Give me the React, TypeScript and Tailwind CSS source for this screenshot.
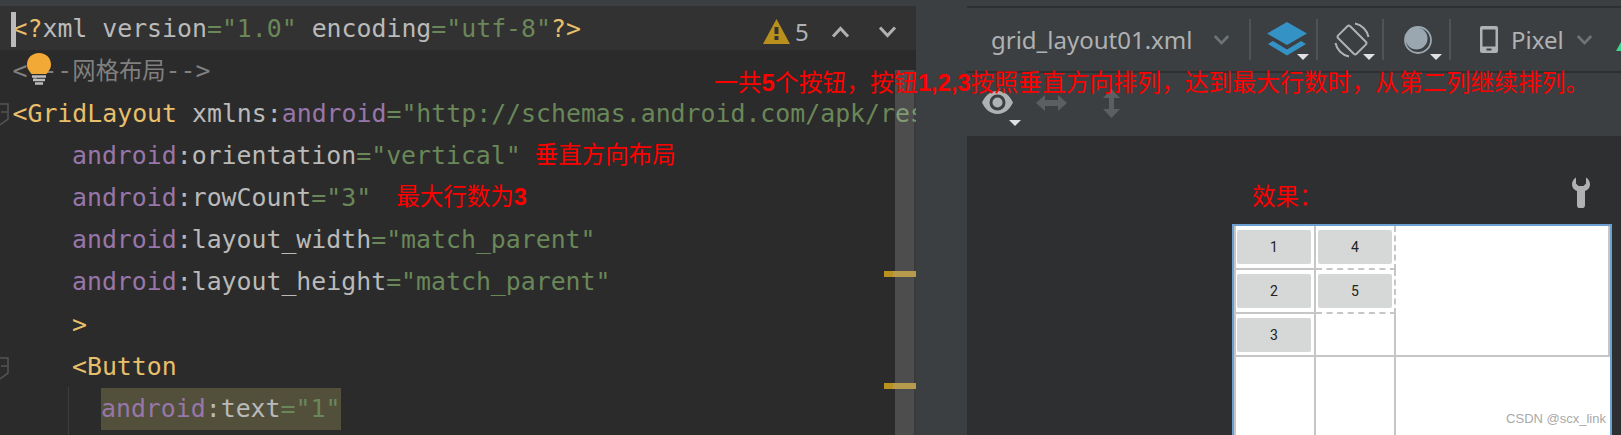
const mono = "font-['DejaVu_Sans_Mono','Liberation_Mono',monospace] text-[24.85px]"
const cjk = "font-['Liberation_Sans','Noto_Sans_CJK_SC',sans-serif]"
const ui = "font-['Noto_Sans','Open_Sans',sans-serif]"

const Tag = ({ children }: { children: React.ReactNode }) => <span className="text-[#e8bf6a]">{children}</span>
const Attr = ({ children }: { children: React.ReactNode }) => <span className="text-[#9876aa]">{children}</span>
const Str = ({ children }: { children: React.ReactNode }) => <span className="text-[#6a8759]">{children}</span>

function Note({ children, className = '' }: { children: React.ReactNode; className?: string }) {
  return <span className={`${cjk} text-[23.5px] text-[#ff0000] ${className}`}>{children}</span>
}

function Line({ children, indent = '' }: { children: React.ReactNode; indent?: string }) {
  return <div className={`h-[42.2px] flex items-center whitespace-pre ${indent}`}>{children}</div>
}

function AndroidAttr({ name, value }: { name: string; value: string }) {
  return (
    <>
      <Attr>android</Attr>:{name}
      <Str>="{value}"</Str>
    </>
  )
}

function Fold() {
  return (
    <svg width="9" height="23" viewBox="0 0 9 23" className="absolute left-0 fill-none stroke-[#555]">
      <path d="M0 1H8V16L0 22M1 9H7" strokeWidth="1.5" />
    </svg>
  )
}

function Caret({ className = '' }: { className?: string }) {
  return (
    <svg width="12" height="6" viewBox="0 0 12 6" className={`absolute ${className}`}>
      <path d="M0 0H12L6 6Z" fill="#dfe1e3" />
    </svg>
  )
}

function Chevron({ up = false, color = '#afb1b3', w = 19 }: { up?: boolean; color?: string; w?: number }) {
  return (
    <svg width={w} height="12" viewBox="0 0 19 12" fill="none">
      <path d={up ? 'M2 10.5L9.5 2.5L17 10.5' : 'M2 1.5L9.5 9.5L17 1.5'} stroke={color} strokeWidth="3" />
    </svg>
  )
}

function Divider() {
  return <div className="w-[2px] h-[41px] bg-[#505356]" />
}

function Editor() {
  return (
    <div className={`relative w-[916px] h-full overflow-hidden bg-[#2b2b2b] text-[#bababa] ${mono}`}>
      <div>
        <div className="h-[44px] pt-[1px] bg-[#323232] flex items-center pl-[12.5px] whitespace-pre">
          <Tag>&lt;?</Tag>xml version<Str>="1.0"</Str> encoding<Str>="utf-8"</Str><Tag>?&gt;</Tag>
        </div>
        <Line indent="pl-[12.5px]">
          <span className="text-[#808080]">
            &lt;!--<span className="font-['Noto_Sans_CJK_SC',sans-serif] text-[23.3px]">网格布局</span>--&gt;
          </span>
        </Line>
        <Line indent="pl-[12.5px]">
          <Tag>&lt;GridLayout</Tag> xmlns:<Attr>android</Attr>
          <Str>="http://schemas.android.com/apk/res/android"</Str>
        </Line>
        <Line indent="pl-[72px]">
          <AndroidAttr name="orientation" value="vertical" />
          <Note className="ml-[14px]">垂直方向布局</Note>
        </Line>
        <Line indent="pl-[72px]">
          <AndroidAttr name="rowCount" value="3" />
          <Note className="ml-[25px]">最大行数为<b>3</b></Note>
        </Line>
        <Line indent="pl-[72px]"><AndroidAttr name="layout_width" value="match_parent" /></Line>
        <Line indent="pl-[72px]"><AndroidAttr name="layout_height" value="match_parent" /></Line>
        <Line indent="pl-[72px]"><Tag>&gt;</Tag></Line>
        <Line indent="pl-[72px]"><Tag>&lt;Button</Tag></Line>
        <Line indent="pl-[101px]">
          <span className="bg-[#52503a] h-full flex items-center w-[240px]">
            <AndroidAttr name="text" value="1" />
          </span>
        </Line>
      </div>

      {/* gutter bits */}
      <div className="absolute left-[11px] top-[6px] w-[5px] h-[35px] bg-[#bbbbbb]" />
      <div className="absolute left-[68px] top-[381px] bottom-0 w-px bg-[#3d3d3d]" />
      <div className="absolute top-[97px] left-0"><Fold /></div>
      <div className="absolute top-[351px] left-0"><Fold /></div>
      <svg width="24" height="32" viewBox="0 0 24 32" className="absolute left-[27px] top-[47px]">
        <path d="M12 0C5 0 0 5 0 11.500C0 16 2.500 18 4.500 21H19.500C21.500 18 24 16 24 11.500C24 5 19 0 12 0Z" fill="#f2a935" />
        <path d="M5 23.500H19M6 27H18M8 30.500H16" stroke="#bdbdbd" strokeWidth="2.400" />
      </svg>

      {/* inspection widget */}
      <div className={`absolute left-[743px] top-[7px] w-[167px] h-[37px] bg-[#323232] rounded-t-lg flex items-center pl-[20px] ${ui}`}>
        <svg width="27" height="25" viewBox="0 0 27 25" className="-mt-[1px]">
          <path d="M13.500 0L27 25H0Z" fill="#b9901b" />
          <rect x="11.500" y="8" width="4" height="7" fill="#323232" />
          <rect x="11.500" y="17" width="4" height="4" fill="#323232" />
        </svg>
        <span className="ml-[5px] w-[36px] text-[24px] text-[#afb1b3]">5</span>
        <Chevron up />
        <span className="w-[28px]" />
        <Chevron />
      </div>

      {/* scrollbar and error stripes, translucent over the code */}
      <div className="absolute left-[895px] top-[64px] bottom-0 w-[19px] bg-white/16" />
      <div className="absolute left-[914px] top-[64px] bottom-0 w-[2px] bg-white/7" />
      <div className="absolute left-[884px] top-[265px] w-[32px] h-[6px] bg-[#b69a4e] border-l-[9px] border-[#b8911e]" />
      <div className="absolute left-[884px] top-[377px] w-[32px] h-[6px] bg-[#b69a4e] border-l-[9px] border-[#b8911e]" />
    </div>
  )
}

function TopBar() {
  return (
    <div className={`relative h-[63px] bg-[#3c3f41] flex items-center ${ui}`}>
      <span className="ml-[24px] w-[222px] text-[24px] text-[#afb1b3]">grid_layout01.xml</span>
      <Chevron color="#6e7376" w={17} />
      <span className="w-[19px]" />
      <Divider />
      <div className="relative w-[65px] h-[63px]">
        <svg width="40" height="36" viewBox="0 0 40 36" className="absolute left-[16px] top-[14px]">
          <path d="M20 0L40 11.500L20 23L0 11.500Z" fill="#3592c4" />
          <path d="M6 19L20 27.500L34 19L39 22L20 33.500L1 22Z" fill="#3592c4" />
        </svg>
        <Caret className="left-[46px] top-[46px]" />
      </div>
      <Divider />
      <div className="relative w-[64px] h-[63px]">
        <svg width="36" height="36" viewBox="0 0 36 36" fill="none" stroke="#afb1b3" className="absolute left-[16px] top-[14px]">
          <rect x="9.500" y="5" width="17" height="26" rx="2" transform="rotate(-45 18 18)" strokeWidth="2" />
          <path d="M21 1.500A17 17 0 0 1 34.500 15M15 34.500A17 17 0 0 1 1.500 21" strokeWidth="2" />
        </svg>
        <Caret className="left-[45px] top-[46px]" />
      </div>
      <Divider />
      <div className="relative w-[65px] h-[63px]">
        <svg width="28" height="28" viewBox="0 0 28 28" className="absolute left-[20px] top-[18px]">
          <circle cx="14" cy="14" r="13" fill="none" stroke="#9aa7b0" strokeWidth="1.800" />
          <circle cx="12.500" cy="12.500" r="11" fill="#9aa7b0" />
        </svg>
        <Caret className="left-[46px] top-[46px]" />
      </div>
      <Divider />
      <svg width="18" height="27" viewBox="0 0 18 27" className="ml-[29px] mr-[13px]">
        <path fillRule="evenodd" d="M2 0H16A2 2 0 0 1 18 2V25A2 2 0 0 1 16 27H2A2 2 0 0 1 0 25V2A2 2 0 0 1 2 0ZM2.500 3.500V20.500H15.500V3.500ZM6.500 22.500V24.500H11.500V22.500Z" fill="#afb1b3" />
      </svg>
      <span className="w-[65px] text-[24px] text-[#afb1b3]">Pixel</span>
      <Chevron color="#6e7376" w={17} />
      <svg width="5" height="9" viewBox="0 0 5 9" className="absolute left-[649px] top-[34px]">
        <path d="M5 0V9H0Z" fill="#3dd68c" />
      </svg>
    </div>
  )
}

function ViewBar() {
  return (
    <div className="relative h-[63px] bg-[#3c3f41] flex items-center pl-[15px]">
      <svg width="31" height="23" viewBox="0 0 31 23" className="-mt-[4px]">
        <path fillRule="evenodd" d="M15.500 0C8 0 3 5 0 11.500C3 18 8 23 15.500 23C23 23 28 18 31 11.500C28 5 23 0 15.500 0ZM15.500 3.500A8 8 0 0 1 15.500 19.500A8 8 0 0 1 15.500 3.500Z" fill="#afb1b3" />
        <circle cx="15.500" cy="11.500" r="5" fill="#afb1b3" />
      </svg>
      <Caret className="left-[42px] top-[47px]" />
      <svg width="31" height="16" viewBox="0 0 31 16" className="ml-[23px] -mt-[3px]">
        <path d="M0 8L9 0V5H22V0L31 8L22 16V11H9V16Z" fill="#5c5f60" />
      </svg>
      <svg width="17" height="29" viewBox="0 0 17 29" className="ml-[36px] -mt-[2px]">
        <path d="M8.500 0L17 9H11V20H17L8.500 29L0 20H6V9H0Z" fill="#5c5f60" />
      </svg>
    </div>
  )
}

function Cell({ label, className = '' }: { label?: string; className?: string }) {
  return (
    <div className={`border-r-2 border-b-2 border-[#c6c6c6] ${className}`}>
      {label && (
        <div className="h-[34px] bg-[#d6d7d7] rounded-[2px] flex items-center justify-center text-[14px] text-[#222] font-['Roboto',sans-serif]">
          {label}
        </div>
      )}
    </div>
  )
}

function Preview() {
  return (
    <div className="flex-1 min-h-0 overflow-hidden bg-[#2e2f31] pl-[265px] pr-[9px]">
      <div className="h-[88px] flex justify-between relative">
        <span className={`${cjk} text-[23.5px] text-[#ff0000] ml-[20px] mt-[47px] h-[28px] leading-[28px]`}>效果：</span>
        <svg width="18" height="31" viewBox="0 0 18 31" className="mt-[41px] mr-[22px]">
          <path d="M4 0.500V6.500L6.500 9H11.500L14 6.500V0.500C16.500 2 18 4.500 18 7.500C18 10.500 16 13 13 14V28.500A3.500 2.500 0 0 1 5 28.500V14C2 13 0 10.500 0 7.500C0 4.500 1.500 2 4 0.500Z" fill="#afb1b3" />
        </svg>
      </div>
      <div className="h-[300px] bg-white border-x-2 border-t-2 border-[#6c9fd2]">
        <div className="grid grid-cols-[82px_80px_1fr] grid-rows-[44px_44px_43px_1fr] h-full">
          <Cell label="1" className="pt-[4px] pl-[1px] pr-[3px] border-l-2" />
          <Cell label="4" className="pt-[4px] px-[2px] border-dashed" />
          <Cell className="row-span-3 border-r-0" />
          <Cell label="2" className="pt-[4px] pl-[1px] pr-[3px] border-l-2" />
          <Cell label="5" className="pt-[4px] px-[2px] border-dashed" />
          <Cell label="3" className="pt-[4px] pl-[1px] pr-[3px] border-l-2" />
          <Cell />
          <Cell className="border-b-0 border-l-2" />
          <Cell className="border-b-0" />
          <div />
        </div>
      </div>
    </div>
  )
}

export default function App() {
  return (
    <div className="relative w-[1621px] h-[435px] overflow-hidden flex flex-col bg-[#3c3f41]">
      <div className="h-[6px] bg-[#3c3f41]" />
      <div className="flex-1 min-h-0 flex">
        <Editor />
        <div className="w-[51px] bg-[#3c3f41]" />
        <div className="flex-1 flex flex-col bg-[#2e2f31] pt-[2px]">
          <TopBar />
          <div className="h-[2px] bg-[#2e2f31]" />
          <ViewBar />
          <Preview />
        </div>
      </div>

      {/* annotations pasted over the screenshot */}
      <div className={`absolute left-[714px] top-[69px] h-[28px] leading-[28px] whitespace-pre ${cjk} text-[23.8px] text-[#ff0000]`}>
        一共<b>5</b>个按钮，按钮<b>1,2,3</b>按照垂直方向排列，达到最大行数时，从第二列继续排列。
      </div>
      <div className="absolute right-[15px] bottom-[9px] font-['Liberation_Sans',sans-serif] text-[13px] leading-[15px] text-[#a8a8a8]">
        CSDN @scx_link
      </div>
    </div>
  )
}
